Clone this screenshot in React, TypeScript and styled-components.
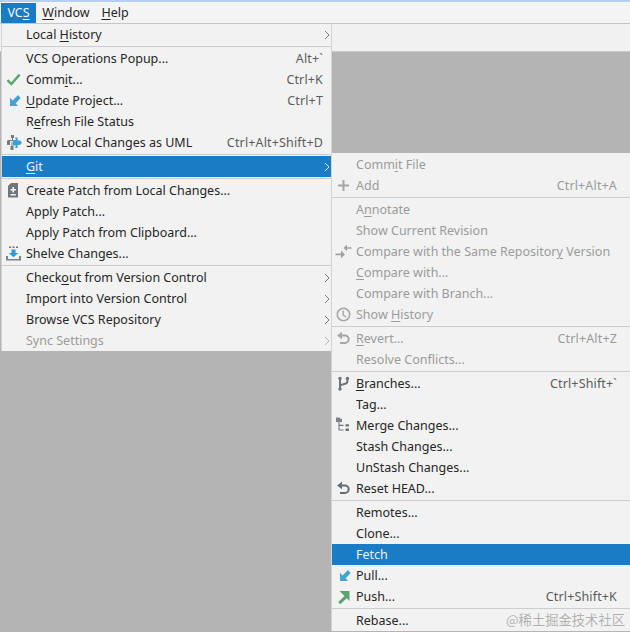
import React from "react";
import styled, { createGlobalStyle } from "styled-components";

const Global = createGlobalStyle`
  html, body { margin: 0; padding: 0; background: #b4b4b4; }
  * { box-sizing: border-box; }
`;

const Page = styled.div`
  position: relative;
  width: 630px;
  height: 632px;
  overflow: hidden;
  display: flex;
  flex-direction: column;
  font-family: "Noto Sans", "Noto Sans CJK SC", sans-serif;
  font-size: 12.5px;
  color: #262626;
`;
const TitleStrip = styled.div`
  height: 2px;
  background: #b5cfee;
`;
const MenuBar = styled.div`
  height: 22px;
  display: flex;
  align-items: flex-start;
  padding: 1px 0 0 1px;
  background: #f4f4f4;
  border-bottom: 1px solid #c6c6c6;
`;
const BarItem = styled.div<{ $active?: boolean; $width: number }>`
  width: ${(p) => p.$width}px;
  height: 20px;
  line-height: 20px;
  text-align: center;
  background: ${(p) => (p.$active ? "#1a7cc4" : "transparent")};
  color: ${(p) => (p.$active ? "#f2f7fb" : "#262626")};
`;
const Toolbar = styled.div`
  height: 28px;
  background: #f1f1f1;
  border-bottom: 1px solid #c9c9c9;
`;
const Workspace = styled.div`
  flex: 1;
  background: #b4b4b4;
`;
const Popup = styled.div<{ $left: number; $top: number; $width: number; $lead: number }>`
  position: absolute;
  left: ${(p) => p.$left}px;
  top: ${(p) => p.$top}px;
  width: ${(p) => p.$width}px;
  padding-top: ${(p) => p.$lead}px;
  background: #f2f2f2;
  display: flex;
  flex-direction: column;
  border-left: 1px solid #d4d4d4;
  border-right: 1px solid #d4d4d4;
`;
const Row = styled.div<{ $selected?: boolean; $disabled?: boolean; $inset: number }>`
  position: relative;
  height: 21px;
  line-height: 21px;
  display: flex;
  justify-content: space-between;
  padding: 0 ${(p) => p.$inset}px 0 24px;
  white-space: nowrap;
  background: ${(p) => (p.$selected ? "#1a7cc4" : "transparent")};
  color: ${(p) => (p.$selected ? "#eaf3fa" : p.$disabled ? "#9b9b9b" : "#262626")};
`;
const Shortcut = styled.span<{ $disabled?: boolean }>`
  letter-spacing: 0.15px;
  color: ${(p) => (p.$disabled ? "#9b9b9b" : "#5c5c5c")};
`;
const Separator = styled.div`
  height: 3px;
  padding-top: 1px;
  &::after {
    content: "";
    display: block;
    height: 1px;
    background: #cdcdcd;
  }
`;
const IconSlot = styled.span`
  position: absolute;
  left: 3px;
  top: 2px;
  width: 17px;
  height: 17px;
  display: block;
  svg { display: block; }
`;
const Chevron = styled.svg`
  position: absolute;
  right: 1px;
  top: 6px;
`;
const Key = styled.u`
  text-underline-offset: 2px;
  text-decoration-thickness: 1px;
`;
const Watermark = styled.div`
  position: absolute;
  right: 5px;
  top: 611px;
  color: rgba(110, 110, 110, 0.5);
  font-size: 13.3px;
  line-height: 18px;
  font-family: "Noto Sans CJK SC", sans-serif;
`;

const Svg = ({ children }: { children: React.ReactNode }) => (
  <svg width="17" height="17" viewBox="0 0 17 17">{children}</svg>
);

const arrowIn = <path d="M13 3 7.6 8.4 5 5.8V14H13.2L10.6 11.4 15.6 6Z" fill="#46a3d6" />;

const icons: Record<string, React.ReactNode> = {
  check: <Svg><path d="M2.5 9.2 6.3 13 14.6 3.6" fill="none" stroke="#5aa673" strokeWidth="2.4" /></Svg>,
  update: <Svg>{arrowIn}</Svg>,
  uml: (
    <Svg>
      <path d="M6 1h3v3H6zM7 4h1v2H7zM2.5 6h8v1h-8zM2 7h3v4H2zM5.5 12h3v4h-3zM6.5 8h1v4h-1z" fill="#747b80" />
      <path d="M10 3.5h2.6v3H15L17 8.7l-2 2.2h-2.4v3H10L11 11.5H8V6h3Z" fill="#3aa0d8" />
    </Svg>
  ),
  patch: (
    <Svg>
      <path d="M6 1h7v14.5H3V4Z" fill="#707579" />
      <path d="M7.4 5h1.6v2h1.9v1.5H9v2H7.4v-2H5.5V7h1.9ZM5.5 12h5.4v1.4H5.5Z" fill="#f2f2f2" />
    </Svg>
  ),
  shelve: (
    <Svg>
      <path d="M4 1.5h2v1.5H4zM7.5 1.5h2v1.5h-2zM11 1.5h2v1.5h-2z" fill="#6d7479" />
      <path d="M6.5 4.5h4V8h2.8l-4.8 4.2L3.7 8h2.8Z" fill="#2f9ad6" />
      <path d="M1 11h2v3h11v-3h2v4.5H1Z" fill="#7b8288" />
    </Svg>
  ),
  plus: <Svg><path d="M7.5 3h2v4.5H14v2H9.5V14h-2V9.5H3v-2h4.5Z" fill="#a6a6a6" /></Svg>,
  compare: (
    <Svg>
      <path d="M0.5 10.5H6V7.5L10 11.5 6 15.2V12.2H0.5Z" fill="#a2a2a2" />
      <path d="M16.5 4.2H12V1.5L8.5 5 12 8.2V5.8h4.5Z" fill="#a2a2a2" />
    </Svg>
  ),
  clock: (
    <Svg>
      <circle cx="8.5" cy="8.5" r="6.2" fill="none" stroke="#a6a6a6" strokeWidth="1.6" />
      <path d="M8.2 4.4V9l3 2" fill="none" stroke="#a6a6a6" strokeWidth="1.4" />
    </Svg>
  ),
  revert: (
    <Svg>
      <path d="M5 5.6H10a3.6 3.6 0 0 1 0 7.4H5" fill="none" stroke="#a6a6a6" strokeWidth="2" />
      <path d="M7 1.8v7.4L2 5.6Z" fill="#a6a6a6" />
    </Svg>
  ),
  reset: (
    <Svg>
      <path d="M5 5.6H10a3.6 3.6 0 0 1 0 7.4H5" fill="none" stroke="#666c70" strokeWidth="2" />
      <path d="M7 1.8v7.4L2 5.6Z" fill="#666c70" />
    </Svg>
  ),
  branches: (
    <Svg>
      <circle cx="5" cy="3.4" r="1.7" fill="#6d7479" />
      <circle cx="5" cy="14" r="1.7" fill="#6d7479" />
      <circle cx="12.4" cy="3.4" r="1.7" fill="#6d7479" />
      <path d="M4 3h2v11H4zM11.4 3h2v3.4c0 2-1.6 3-3.2 3.4L6 11V9l3.8-1.2c1-.3 1.6-.7 1.6-1.6Z" fill="#6d7479" />
    </Svg>
  ),
  merge: (
    <Svg>
      <path d="M1 0.5h3.4l1 1.2H7V5H1Z" fill="#7b8288" />
      <path d="M3.5 5h1v2.8h4V9h-4v3.4h4v1.2h-5Z" fill="#6d7479" />
      <path d="M10.5 7.2H14v2.4h-3.5zM10.5 11.4H14v2.6h-3.5z" fill="#6d7479" />
    </Svg>
  ),
  pull: <Svg>{arrowIn}</Svg>,
  push: <Svg><path d="M4.5 3H14.5V13L11.8 10.3 5.2 16.2 3.2 14 9.5 8Z" fill="#5aa673" /></Svg>,
};

type Item = {
  label?: React.ReactNode;
  shortcut?: string;
  icon?: string;
  arrow?: boolean;
  selected?: boolean;
  disabled?: boolean;
  sep?: boolean;
};

const m = (before: string, key: string, after: string) => (
  <span>{before}<Key>{key}</Key>{after}</span>
);
const SEP: Item = { sep: true };

const vcsMenu: Item[] = [
  { label: m("Local ", "H", "istory"), arrow: true },
  SEP,
  { label: "VCS Operations Popup...", shortcut: "Alt+`" },
  { label: m("Comm", "i", "t..."), shortcut: "Ctrl+K", icon: "check" },
  { label: m("", "U", "pdate Project..."), shortcut: "Ctrl+T", icon: "update" },
  { label: m("R", "e", "fresh File Status") },
  { label: "Show Local Changes as UML", shortcut: "Ctrl+Alt+Shift+D", icon: "uml" },
  SEP,
  { label: m("", "G", "it"), arrow: true, selected: true },
  SEP,
  { label: "Create Patch from Local Changes...", icon: "patch" },
  { label: "Apply Patch..." },
  { label: "Apply Patch from Clipboard..." },
  { label: "Shelve Changes...", icon: "shelve" },
  SEP,
  { label: m("Check", "o", "ut from Version Control"), arrow: true },
  { label: "Import into Version Control", arrow: true },
  { label: "Browse VCS Repository", arrow: true },
  { label: "Sync Settings", arrow: true, disabled: true },
];

const gitMenu: Item[] = [
  { label: m("Comm", "i", "t File"), disabled: true },
  { label: "Add", shortcut: "Ctrl+Alt+A", icon: "plus", disabled: true },
  SEP,
  { label: m("A", "n", "notate"), disabled: true },
  { label: "Show Current Revision", disabled: true },
  { label: m("Compare with the Same Repositor", "y", " Version"), icon: "compare", disabled: true },
  { label: m("", "C", "ompare with..."), disabled: true },
  { label: "Compare with Branch...", disabled: true },
  { label: m("Show ", "H", "istory"), icon: "clock", disabled: true },
  SEP,
  { label: m("", "R", "evert..."), shortcut: "Ctrl+Alt+Z", icon: "revert", disabled: true },
  { label: "Resolve Conflicts...", disabled: true },
  SEP,
  { label: m("", "B", "ranches..."), shortcut: "Ctrl+Shift+`", icon: "branches" },
  { label: "Tag..." },
  { label: "Merge Changes...", icon: "merge" },
  { label: "Stash Changes..." },
  { label: "UnStash Changes..." },
  { label: "Reset HEAD...", icon: "reset" },
  SEP,
  { label: "Remotes..." },
  { label: "Clone..." },
  { label: "Fetch", selected: true },
  { label: "Pull...", icon: "pull" },
  { label: "Push...", shortcut: "Ctrl+Shift+K", icon: "push" },
  SEP,
  { label: "Rebase..." },
];

const Menu = ({ items, left, top, width, inset, lead }: { items: Item[]; left: number; top: number; width: number; inset: number; lead: number }) => (
  <Popup $left={left} $top={top} $width={width} $lead={lead}>
    {items.map((it, i) =>
      it.sep ? (
        <Separator key={i} />
      ) : (
        <Row key={i} $selected={it.selected} $disabled={it.disabled} $inset={inset}>
          {it.icon && <IconSlot>{icons[it.icon]}</IconSlot>}
          {it.label}
          {it.shortcut && <Shortcut $disabled={it.disabled}>{it.shortcut}</Shortcut>}
          {it.arrow && (
            <Chevron width="6" height="10" viewBox="0 0 6 10">
              <path d="M1 1l4 4-4 4" fill="none" stroke={it.selected ? "#d8e8f4" : it.disabled ? "#b5b5b5" : "#777"} strokeWidth="1" />
            </Chevron>
          )}
        </Row>
      )
    )}
  </Popup>
);

export default function App() {
  return (
    <Page>
      <Global />
      <TitleStrip />
      <MenuBar>
        <BarItem $active $width={35}>VC<Key>S</Key></BarItem>
        <BarItem $width={60}><Key>W</Key>indow</BarItem>
        <BarItem $width={38}><Key>H</Key>elp</BarItem>
      </MenuBar>
      <Toolbar />
      <Workspace />
      <Menu items={vcsMenu} left={1} top={24} width={331} inset={8} lead={0} />
      <Menu items={gitMenu} left={331} top={153} width={300} inset={13} lead={1} />
      <Watermark>@稀土掘金技术社区</Watermark>
    </Page>
  );
}
